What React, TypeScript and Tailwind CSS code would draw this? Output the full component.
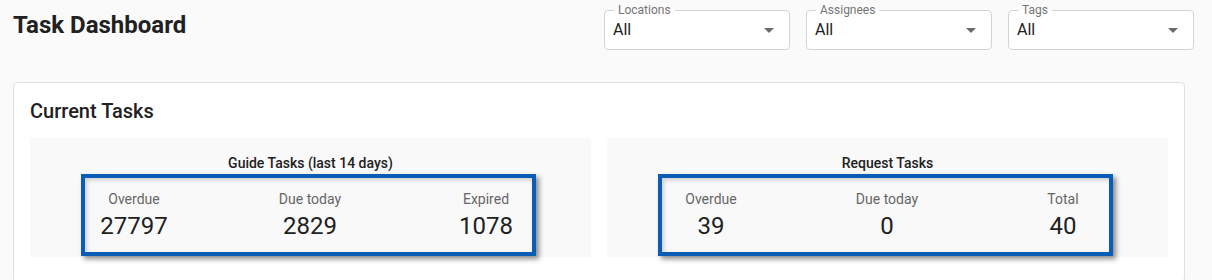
import { ReactNode } from "react";

const filters = ["Locations", "Assignees", "Tags"];

const guideStats = [
  ["Overdue", "27797"],
  ["Due today", "2829"],
  ["Expired", "1078"],
];

const requestStats = [
  ["Overdue", "39"],
  ["Due today", "0"],
  ["Total", "40"],
];

function FilterSelect({ label }: { label: string }) {
  return (
    <fieldset className="w-[186px] rounded-[4px] border border-[#d4d4d4] bg-white">
      <legend className="ml-[9px] px-[4px] text-xs leading-4 text-[#757575]">{label}</legend>
      <div className="flex h-6 items-center justify-between pl-2 pr-2 pb-0">
        <span className="text-base leading-6 text-[#212121]">All</span>
        <svg width="24" height="24" viewBox="0 0 24 24" className="fill-[#6b6b6b]">
          <path d="M7 10l5 5 5-5z" />
        </svg>
      </div>
      <div className="h-[7px]" />
    </fieldset>
  );
}

function StatPanel({ title, stats, children }: { title: string; stats: string[][]; children?: ReactNode }) {
  return (
    <div className="bg-[#f9f9f9] pt-[15px] pb-[1px]">
      <div className="text-center text-sm leading-5 font-medium text-[#212121]">{title}</div>
      <div className="mt-[1px] ml-[51px] w-[455px] border-4 border-[#0a5db5] bg-[#f9f9f9] pt-[11px] pb-[12px] pl-[3px] shadow-[3px_3px_5px_rgba(0,0,0,0.45),inset_2px_2px_4px_rgba(0,0,0,0.18)]">
        <div className="flex justify-center gap-[86px]">
          {stats.map(([label, value]) => (
            <div key={label} className="w-[90px] text-center">
              <div className="text-sm leading-5 text-[#666666]">{label}</div>
              <div className="mt-[3px] text-2xl leading-7 text-[#212121]">{value}</div>
            </div>
          ))}
        </div>
      </div>
      {children}
    </div>
  );
}

export default function App() {
  return (
    <div className="min-h-screen bg-[#fafafa] font-['Roboto',sans-serif]">
      <div className="flex items-start pt-[2px] pl-[13px] pr-[18px]">
        <h1 className="mt-[7px] text-2xl leading-8 font-bold text-[#212121]">Task Dashboard</h1>
        <div className="ml-auto flex gap-4">
          {filters.map((f) => (
            <FilterSelect key={f} label={f} />
          ))}
        </div>
      </div>

      <div className="mt-[32px] ml-[13px] w-[1172px] rounded-[4px] border border-[#e0e0e0] bg-white px-4 pt-[14px] pb-6">
        <h2 className="text-xl leading-7 font-medium text-[#212121]">Current Tasks</h2>
        <div className="mt-[13px] grid grid-cols-2 gap-4">
          <StatPanel title="Guide Tasks (last 14 days)" stats={guideStats} />
          <StatPanel title="Request Tasks" stats={requestStats} />
        </div>
      </div>
    </div>
  );
}
